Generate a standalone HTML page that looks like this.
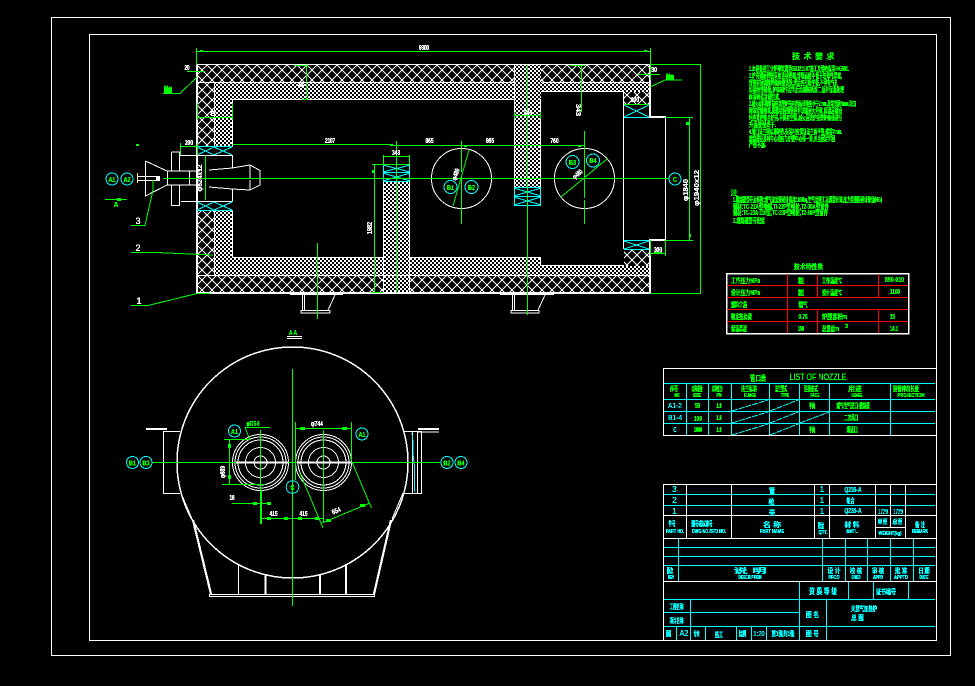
<!DOCTYPE html>
<html lang="zh">
<head>
<meta charset="utf-8">
<title>CAD Drawing</title>
<style>
html,body{margin:0;padding:0;background:#000;width:975px;height:686px;overflow:hidden}
svg{display:block}
text{font-family:"Liberation Sans","Noto Sans CJK SC",sans-serif;font-weight:700;font-size:7px;text-anchor:middle}
.g{fill:#0f0}.w{fill:#fff}.c{fill:#0ff}
.l{text-anchor:start}
.t{font-weight:400}
</style>
</head>
<body>
<svg width="975" height="686" viewBox="0 0 975 686" xmlns="http://www.w3.org/2000/svg" shape-rendering="crispEdges" fill="none">
<defs>
<pattern id="co" width="10" height="10" patternUnits="userSpaceOnUse" x="197" y="65"><path d="M0 0L10 10M10 0L0 10" stroke="#fff" stroke-width="1"/></pattern>
<pattern id="fi" width="4" height="4" patternUnits="userSpaceOnUse"><rect x="0" y="0" width="2" height="2" fill="#fff"/><rect x="2" y="2" width="2" height="2" fill="#fff"/></pattern>
<filter id="th" filterUnits="userSpaceOnUse" x="0" y="0" width="975" height="686" color-interpolation-filters="sRGB"><feComponentTransfer><feFuncA type="discrete" tableValues="0 1 1 1 1 1"/></feComponentTransfer></filter>
</defs>
<rect width="975" height="686" fill="#000"/>

<!-- frames -->
<rect x="51.5" y="17.5" width="899" height="638" stroke="#fff"/>
<rect x="89.5" y="34.5" width="847" height="606" stroke="#fff"/>

<!-- hatches -->
<g fill="url(#co)">
<rect x="197" y="65" width="452" height="17"/>
<rect x="197" y="82" width="17" height="64"/>
<rect x="197" y="210" width="17" height="66"/>
<rect x="197" y="276" width="453" height="17"/>
<rect x="624" y="92" width="25" height="12"/>
<rect x="624" y="249" width="25" height="17"/>
</g>
<g fill="#000"><rect x="514" y="65" width="27" height="122"/><rect x="383" y="276" width="27" height="17"/></g>
<g fill="url(#fi)">
<rect x="214" y="83" width="300" height="16"/>
<rect x="541" y="83" width="108" height="9"/>
<rect x="214" y="99" width="19" height="47"/>
<rect x="214" y="210" width="19" height="47"/>
<rect x="214" y="257" width="327" height="18"/>
<rect x="541" y="266" width="108" height="9"/>
<rect x="514" y="65" width="27" height="122"/>
<rect x="383" y="181" width="27" height="112"/>
</g>

<!-- white body lines -->
<path stroke="#fff" d="M197 64.5H650M197 82.5H514M541 82.5H650M214.5 82V146M214.5 210V275M233 99.5H514M232.5 99V146M232.5 210V257M233 257.5H383M410 257.5H541M540.5 99V187M514.5 65V187M541 91.5H624M623.5 92V249M623.5 117V240M541 265.5H624M540.5 257V266M197 275.5H650M197 292.5H650M383.5 181V292M409.5 181V292M665.5 117V240"/>
<path stroke="#fff" stroke-width="2" d="M197 64V293M650 64V117M650 240V293M649 117H666M649 240H666M197 293H650"/>

<!-- cyan section cells -->
<g stroke="#0ff">
<path d="M197 146.5H233M197 155.5H233M197 147L214 155M214 147L197 155M214 147L232 155M232 147L214 155"/>
<path d="M197 201.5H233M197 210.5H233M197 202L214 210M214 202L197 210M214 202L232 210M232 202L214 210"/>
<path d="M383 164.5H410M383 172.5H410M383 181.5H410M383.5 164V181M409.5 164V181M383 165L410 172M410 165L383 172M383 173L410 181M410 173L383 181"/>
<path d="M514 187.5H541M514 196.5H541M514 205.5H541M514.5 187V206M540.5 187V206M514 188L541 196M541 188L514 196M514 197L541 205M541 197L514 205"/>
<path d="M624 104.5H649M624 117.5H649M624 105L649 117M649 105L624 117"/>
<path d="M624 240.5H649M624 249.5H649M624 241L649 249M649 241L624 249"/>
</g>

<!-- supports -->
<g stroke="#fff">
<path stroke-width="2" d="M290 294H343M500 294H554"/>
<path d="M302.5 295V311M304.5 295V311M301 310.5H330V313H301ZM335 295L328 310"/>
<path d="M512.5 295V311M514.5 295V311M511 310.5H539V313H511ZM545 295L538 310"/>
</g>

<!-- burner -->
<path stroke="#fff" d="M145.5 161L167 171H200M145.5 161V196L167 185H200M167.5 171V185M189.5 171V185M171.5 152V171M179.5 152V171M171.5 152H180M180 155.5H232M232.5 155V168L209 170M232 168L250 165L260 170.5V179M250 165V178M260 179V185L250 190L232 189L209 187M250 180V190M232.5 189V201M181 201.5H232M171.5 185V205.5H180M179.5 185V205"/>
<path stroke="#ff0" d="M137.5 173V183"/>
<path stroke="#fff" d="M137 176.5H160M137 180.5H160"/>
<rect x="156" y="177" width="4" height="3" fill="#fff"/>

<!-- circles on elevation -->
<g stroke="#fff"><circle cx="461.5" cy="178.5" r="30"/><circle cx="584.5" cy="178.5" r="30"/></g>

<!-- green lines elevation -->
<g stroke="#0f0">
<path d="M197 51.5H650M196.5 48V65M650.5 48V80"/>
<path d="M187 71.5H205M163 93.5H180L197 77"/>
<path d="M294 65.5H308M306.5 65V99M302 99.5H308"/>
<path d="M570 65.5H585M581.5 65V112"/>
<path d="M197.5 103V120M232.5 103V120M197 117.5H232"/>
<path d="M180.5 143V155M197.5 143V155M180 146.5H197"/>
<path d="M233 144.5H393M393 145.5H461M461 145.5H584"/>
<path d="M372 164.5H410M374.5 164V292M371 292.5H383M383.5 155V165M409.5 155V165M383 156.5H409"/>
<path d="M396.5 141V293M527.5 65V315M317.5 243V319"/>
<path d="M461.5 141V172M461.5 176V224M584.5 131V198M584.5 200V224"/>
<path d="M163 178.5H427M427 178.5H669"/>
<path d="M453 206L469 150M561 197L607 159"/>
<path d="M205.5 155V200"/>
<path d="M514 115.5H541M514.5 112V119M540.5 112V119"/>
<path d="M105 199.5H127M131 225.5H145L153 190V180M131 252.5H157L179 253.5L213 255M131 305.5H148L197 293.5H210"/>
<path d="M638 74.5H660M650 87L665 80H682M624 104.5H649"/>
<path d="M650.5 240V256M665.5 240V256M650 253.5H665M665 117.5H693M689.5 117V240M665 240.5H693"/>
<path d="M650 64.5H701M700.5 64V293M650 293.5H701"/>
</g>
<g fill="#0f0">
<rect x="200" y="50" width="3" height="2"/><rect x="644" y="50" width="3" height="2"/>
<rect x="164" y="88" width="8" height="5"/><rect x="666" y="75" width="8" height="5"/>
<rect x="117" y="198" width="4" height="3"/>
<rect x="136" y="144" width="3" height="2"/><rect x="390" y="144" width="3" height="2"/>
<rect x="464" y="145" width="3" height="2"/><rect x="578" y="145" width="3" height="2"/>
<rect x="372" y="170" width="3" height="3"/><rect x="686" y="122" width="3" height="3"/><rect x="689" y="234" width="2" height="3"/>
<rect x="654" y="252" width="8" height="2"/>
</g>

<!-- cyan circles elevation -->
<g stroke="#0ff">
<circle cx="112" cy="179" r="6"/><circle cx="127" cy="179" r="6"/>
<circle cx="572.5" cy="162" r="6.5"/><circle cx="593" cy="160.5" r="6.5"/>
<circle cx="450.5" cy="187" r="6.5"/><circle cx="471.5" cy="187" r="6.5"/>
<circle cx="675" cy="179" r="6"/>
</g>

<!-- plan view -->
<g stroke="#fff">
<circle cx="292.5" cy="462.5" r="115.5" stroke-width="1.5"/>
<path stroke-width="2" d="M146 429H167M418 429H439"/>
<path d="M163.5 431V493.5H180M163.5 431.5H180M403 431.5H421.5V493.5H403M412.5 432V493M417.5 432V493M417 432H439"/>
<path d="M181 493L192 519M403 493L392 519M209.5 594.5H375M209.5 596.5H375M209.5 594V597M374.5 594V597"/>
<path stroke-width="2.2" d="M193 520L211 594M391 520L374 594M265.5 575V594M320 575V594M346 564V594"/>
<path d="M238.5 564V594"/>
<path d="M287 336.5H302M287 338.5H302"/>
<g>
<circle cx="260.5" cy="462.5" r="28"/><circle cx="260.5" cy="462.5" r="25.5"/><circle cx="260.5" cy="462.5" r="22.5"/><circle cx="260.5" cy="462.5" r="15"/><circle cx="260.5" cy="462.5" r="6.5"/>
<circle cx="323.5" cy="462.5" r="28"/><circle cx="323.5" cy="462.5" r="25.5"/><circle cx="323.5" cy="462.5" r="22.5"/><circle cx="323.5" cy="462.5" r="15"/><circle cx="323.5" cy="462.5" r="6.5"/>
</g>
</g>
<path stroke="#0ff" d="M412 433C414 445 412 452 414 462C416 475 413 482 415 492"/>
<g stroke="#0f0">
<path d="M152 462.5H440"/>
<path d="M292.5 369V606"/>
<path d="M260.5 430V490M323.5 430V521"/>
<path stroke-width="2" d="M261 490V524"/>
<path d="M296 428.5H351M295.5 422V480M351.5 422V461"/>
<path d="M245 427.5H270M245 427.5L250 440"/>
<path d="M224 439.5H250M229.5 439V484M222 484.5H265"/>
<path d="M232 503.5H270M260 518.5H323M323.5 490V522"/>
<path d="M300 473L323 528M352 462L371.5 508M322 523L370 503"/>
</g>
<path stroke="#fff" stroke-width="2" d="M236 462.5H288M297 462.5H351"/>
<g fill="#0f0">
<rect x="228" y="444" width="3" height="4"/><rect x="228" y="475" width="3" height="4"/>
<rect x="300" y="427" width="5" height="3"/><rect x="342" y="427" width="5" height="3"/>
<rect x="253" y="502" width="4" height="3"/><rect x="267" y="502" width="4" height="3"/>
<rect x="267" y="517" width="4" height="3"/><rect x="284" y="517" width="4" height="3"/><rect x="298" y="517" width="4" height="3"/><rect x="315" y="517" width="4" height="3"/>
<rect x="326" y="519" width="5" height="3"/><rect x="360" y="504" width="5" height="3"/>
</g>
<g stroke="#0ff">
<circle cx="234.5" cy="431" r="6"/><circle cx="362" cy="434" r="6"/><circle cx="292.5" cy="487" r="6.3"/>
<circle cx="132.5" cy="462.5" r="6"/><circle cx="146" cy="462.5" r="6"/>
<circle cx="447" cy="462.5" r="6"/><circle cx="461" cy="462.5" r="6"/>
</g>

<!-- tech table -->
<rect x="726.5" y="273.5" width="182" height="60" stroke="#fff" stroke-width="1.5"/>
<path stroke="#f00" d="M727 285.5H908M727 297.5H908M727 309.5H908M727 321.5H908M787.5 274V333M817.5 274V297M817.5 310V333M878.5 274V297M878.5 310V333"/>

<!-- nozzle table -->
<g stroke="#0ff">
<path d="M664 383.5H935M664 399.5H935M664 411.5H935M664 423.5H935M686.5 383V436M708.5 383V436M731.5 383V436M769.5 383V436M799.5 383V436M829.5 383V436M890.5 383V436"/>
<path stroke-dasharray="6 1" d="M732 411L768 400M770 411L798 400M732 423L768 412M770 423L798 412M800 423L829 412M732 435L768 424M770 435L798 424"/>
</g>
<path stroke="#fff" d="M663.5 368V436M664 368.5H936M664 435.5H936"/>

<!-- parts table -->
<g stroke="#0ff">
<path d="M664 494.5H935M664 505.5H935M664 547.5H935M664 556.5H935M664 565.5H935M678.5 539V581M822.5 539V581M845.5 539V581M867.5 539V581M890.5 539V581M913.5 539V581"/>
<path d="M664 599.5H935M664 612.5H799M664 626.5H935M799.5 582V640M848.5 582V599M873.5 582V599M908.5 582V599M690.5 600V640M826.5 600V640M676.5 627V640M705.5 627V640M736.5 627V640M751.5 627V640M766.5 627V640"/>
</g>
<path stroke="#fff" d="M663.5 484V640M664 484.5H936M664 515.5H936M664 538.5H936M664 581.5H936M686.5 484V538M731.5 484V538M814.5 484V538M829.5 484V538M875.5 484V538M890.5 484V528M905.5 484V538M875 527.5H905"/>

<!-- all text -->
<g filter="url(#th)">
<!-- elevation dims -->
<text class="w" x="424" y="50" textLength="10" lengthAdjust="spacingAndGlyphs">9300</text>
<text class="w" x="187" y="70" textLength="5" lengthAdjust="spacingAndGlyphs">20</text>
<text class="g" x="168" y="91" font-size="6" style="font-size:6px" textLength="8" lengthAdjust="spacingAndGlyphs">耐火</text>
<text class="w" x="301" y="87" textLength="6" lengthAdjust="spacingAndGlyphs">8</text>
<text class="w" x="213" y="116" textLength="6" lengthAdjust="spacingAndGlyphs">8</text>
<text class="w" x="189" y="145" textLength="8" lengthAdjust="spacingAndGlyphs">200</text>
<text class="w" x="330" y="143" textLength="10" lengthAdjust="spacingAndGlyphs">2107</text>
<text class="w" x="396" y="155" textLength="8" lengthAdjust="spacingAndGlyphs">343</text>
<text class="w" x="429.5" y="143" textLength="8" lengthAdjust="spacingAndGlyphs">865</text>
<text class="w" x="490" y="143" textLength="8" lengthAdjust="spacingAndGlyphs">865</text>
<text class="w" x="554.5" y="143" textLength="8" lengthAdjust="spacingAndGlyphs">760</text>
<text class="w" x="528" y="115" textLength="8" lengthAdjust="spacingAndGlyphs">343</text>
<text class="w" x="635" y="102" textLength="8" lengthAdjust="spacingAndGlyphs">100</text>
<text class="w" x="658" y="252" textLength="8" lengthAdjust="spacingAndGlyphs">300</text>
<text class="w" x="654" y="72" textLength="6" lengthAdjust="spacingAndGlyphs">30</text>
<text class="g" x="670" y="79" style="font-size:6px" textLength="8" lengthAdjust="spacingAndGlyphs">耐火</text>
<text class="w" transform="translate(202,178) rotate(-90)" textLength="27" lengthAdjust="spacingAndGlyphs">φ624x12</text>
<text class="w" transform="translate(372,228) rotate(-90)" textLength="12" lengthAdjust="spacingAndGlyphs">1982</text>
<text class="w" transform="translate(576,110) rotate(90)" textLength="12" lengthAdjust="spacingAndGlyphs">343</text>
<text class="w" transform="translate(458,175) rotate(-72)" textLength="12" lengthAdjust="spacingAndGlyphs">φ480</text>
<text class="w" transform="translate(579,176) rotate(-40)" textLength="11" lengthAdjust="spacingAndGlyphs">φ480</text>
<text class="w" transform="translate(688,190) rotate(-90)" textLength="22" lengthAdjust="spacingAndGlyphs">φ1840</text>
<text class="w" transform="translate(699,188) rotate(-90)" textLength="36" lengthAdjust="spacingAndGlyphs">φ1940x12</text>
<text class="g" x="112" y="182" textLength="7" lengthAdjust="spacingAndGlyphs">A1</text>
<text class="g" x="127" y="182" textLength="7" lengthAdjust="spacingAndGlyphs">A2</text>
<text class="g" x="116" y="207" textLength="5" lengthAdjust="spacingAndGlyphs">A</text>
<text class="w t" x="138" y="224" style="font-size:9px">3</text>
<text class="w t" x="138" y="251" style="font-size:9px">2</text>
<text class="w t" x="139" y="304" style="font-size:9px">1</text>
<text class="g" x="572.5" y="165" textLength="7" lengthAdjust="spacingAndGlyphs">B3</text>
<text class="g" x="593" y="163" textLength="7" lengthAdjust="spacingAndGlyphs">B4</text>
<text class="g" x="450.5" y="190" textLength="7" lengthAdjust="spacingAndGlyphs">B1</text>
<text class="g" x="471.5" y="190" textLength="7" lengthAdjust="spacingAndGlyphs">B2</text>
<text class="g" x="675" y="182" textLength="4" lengthAdjust="spacingAndGlyphs">C</text>

<!-- plan dims -->
<text class="g" x="293" y="335" textLength="8" lengthAdjust="spacingAndGlyphs">A-A</text>
<text class="w" x="317" y="426" textLength="12" lengthAdjust="spacingAndGlyphs">φ744</text>
<text class="g" x="253" y="426" textLength="13" lengthAdjust="spacingAndGlyphs">φ575-8</text>
<text class="g" x="234.5" y="434" textLength="7" lengthAdjust="spacingAndGlyphs">A1</text>
<text class="g" x="362" y="437" textLength="7" lengthAdjust="spacingAndGlyphs">A1</text>
<text class="g" x="292.5" y="490" textLength="4" lengthAdjust="spacingAndGlyphs">C</text>
<text class="g" x="132.5" y="465.5" textLength="7" lengthAdjust="spacingAndGlyphs">B1</text>
<text class="g" x="146" y="465.5" textLength="7" lengthAdjust="spacingAndGlyphs">B3</text>
<text class="g" x="447" y="465.5" textLength="7" lengthAdjust="spacingAndGlyphs">B2</text>
<text class="g" x="461" y="465.5" textLength="7" lengthAdjust="spacingAndGlyphs">B4</text>
<text class="w" transform="translate(225,472) rotate(-90)" textLength="12" lengthAdjust="spacingAndGlyphs">φ689</text>
<text class="w" x="232" y="500" textLength="5" lengthAdjust="spacingAndGlyphs">16</text>
<text class="w" x="273.5" y="516" textLength="8" lengthAdjust="spacingAndGlyphs">415</text>
<text class="w" x="303.5" y="516" textLength="8" lengthAdjust="spacingAndGlyphs">415</text>
<text class="w" transform="translate(337,513) rotate(-22)" textLength="9" lengthAdjust="spacingAndGlyphs">654</text>

<!-- requirements -->
<text class="g" x="796" y="59" style="font-size:8px">技</text>
<text class="g" x="807.5" y="59" style="font-size:8px">术</text>
<text class="g" x="819" y="59" style="font-size:8px">要</text>
<text class="g" x="830.5" y="59" style="font-size:8px">求</text>
<g class="g" style="fill:#0f0">
<text class="g l" x="749" y="71" textLength="100" lengthAdjust="spacingAndGlyphs">1.本设备按工业炉砌筑规范GBJ211-87施工及验收标准-HG501.</text>
<text class="g l" x="749" y="78" textLength="93" lengthAdjust="spacingAndGlyphs">2.炉壳钢板焊接采用连续焊缝,焊缝高度不低于较薄件厚度,</text>
<text class="g l" x="749" y="85" textLength="89" lengthAdjust="spacingAndGlyphs">焊接前须清除焊缝两侧铁锈,焊后应打磨平整,不得有气孔</text>
<text class="g l" x="749" y="92" textLength="95" lengthAdjust="spacingAndGlyphs">和裂纹等缺陷,炉体制作完毕后涂刷防锈漆二道并保温处理</text>
<text class="g l" x="749" y="99" textLength="31" lengthAdjust="spacingAndGlyphs">面漆两道涂刷完成.</text>
<text class="g l" x="749" y="106" textLength="107" lengthAdjust="spacingAndGlyphs">3.耐火材料砌筑前应清理炉壳内表面,砖缝应小于2mm,灰浆饱满5mm.均匀</text>
<text class="g l" x="749" y="113" textLength="93" lengthAdjust="spacingAndGlyphs">砌体错缝砌筑,膨胀缝按图留设并填塞耐火纤维,保温层铺设</text>
<text class="g l" x="749" y="120" textLength="93" lengthAdjust="spacingAndGlyphs">时应紧密贴合炉壳,不得有空隙,耐火层烘炉按烘炉曲线进行</text>
<text class="g l" x="749" y="127" textLength="27" lengthAdjust="spacingAndGlyphs">升温缓慢烘干.</text>
<text class="g l" x="749" y="134" textLength="93" lengthAdjust="spacingAndGlyphs">4.管口法兰按标准制作,安装时应保证法兰面平整,螺栓7mm.</text>
<text class="g l" x="749" y="141" textLength="86" lengthAdjust="spacingAndGlyphs">燃烧器安装时中心线应与炉膛中心线一致,并且固定牢固</text>
<text class="g l" x="749" y="147" textLength="17" lengthAdjust="spacingAndGlyphs">严密不漏.</text>
</g>

<!-- notes -->
<text class="g" x="734" y="195">注</text>
<text class="g l" x="733" y="202" textLength="149" lengthAdjust="spacingAndGlyphs">1.燃烧器型号及参数:燃气流量按设计选用1100kg,空气量按工况调整计算,压力范围按设计取值(HG)</text>
<text class="g l" x="733" y="209" textLength="96" lengthAdjust="spacingAndGlyphs">钢材:TC-22A型喷嘴,TI-22P型喷枪,T2-30A型管件</text>
<text class="g l" x="733" y="215" textLength="95" lengthAdjust="spacingAndGlyphs">钢材:TC-23A-110型,TC-23P型喷枪,T2-30P型管件</text>
<text class="g l" x="733" y="223" textLength="32" lengthAdjust="spacingAndGlyphs">2.燃烧器型号配套</text>

<text class="g" x="808.5" y="269" textLength="29" lengthAdjust="spacingAndGlyphs">技术特性表</text>
<text class="g l" x="731" y="283" textLength="29" lengthAdjust="spacingAndGlyphs">工作压力MPa</text>
<text class="g" x="801" y="283" textLength="6" lengthAdjust="spacingAndGlyphs">常压</text>
<text class="g l" x="822" y="283" textLength="20" lengthAdjust="spacingAndGlyphs">工作温度℃</text>
<text class="g" x="894.5" y="282" textLength="19" lengthAdjust="spacingAndGlyphs">850-910</text>
<text class="g l" x="731" y="295" textLength="29" lengthAdjust="spacingAndGlyphs">设计压力MPa</text>
<text class="g" x="801" y="295" textLength="6" lengthAdjust="spacingAndGlyphs">常压</text>
<text class="g l" x="822" y="295" textLength="20" lengthAdjust="spacingAndGlyphs">设计温度℃</text>
<text class="g" x="895" y="294" textLength="10" lengthAdjust="spacingAndGlyphs">1100</text>
<text class="g l" x="731" y="307" textLength="16" lengthAdjust="spacingAndGlyphs">燃料介质</text>
<text class="g" x="803" y="307" textLength="9" lengthAdjust="spacingAndGlyphs">燃气</text>
<text class="g l" x="731" y="319" textLength="21" lengthAdjust="spacingAndGlyphs">额定热负荷</text>
<text class="g" x="803" y="319" textLength="9" lengthAdjust="spacingAndGlyphs">0.75</text>
<text class="g l" x="822" y="319" textLength="25" lengthAdjust="spacingAndGlyphs">炉膛容积m</text>
<text class="g" x="892.5" y="319" textLength="5" lengthAdjust="spacingAndGlyphs">15</text>
<text class="g l" x="731" y="331" textLength="16" lengthAdjust="spacingAndGlyphs">保温厚度</text>
<text class="g" x="801" y="331" textLength="6" lengthAdjust="spacingAndGlyphs">150</text>
<text class="g l" x="822" y="331" textLength="17" lengthAdjust="spacingAndGlyphs">总重量m</text>
<text class="g" x="846.5" y="328" style="font-size:6px">3</text>
<text class="g" x="894" y="331" textLength="8" lengthAdjust="spacingAndGlyphs">14.1</text>

<!-- nozzle table text -->
<text class="g" x="758" y="381" style="font-size:8px" textLength="16" lengthAdjust="spacingAndGlyphs">管口表</text>
<text class="g t" x="818" y="380" style="font-size:9px" textLength="57" lengthAdjust="spacingAndGlyphs">LIST OF NOZZLE</text>
<text class="g" x="674" y="391" textLength="8" lengthAdjust="spacingAndGlyphs">序号</text>
<text class="g" x="697" y="391" textLength="11" lengthAdjust="spacingAndGlyphs">公称通径</text>
<text class="g" x="717" y="391" textLength="11" lengthAdjust="spacingAndGlyphs">公称压力</text>
<text class="g" x="749" y="391" textLength="16" lengthAdjust="spacingAndGlyphs">法兰标准</text>
<text class="g" x="781" y="391" textLength="12" lengthAdjust="spacingAndGlyphs">法兰型式</text>
<text class="g" x="811" y="391" textLength="14" lengthAdjust="spacingAndGlyphs">连接形式</text>
<text class="g" x="855" y="391" textLength="14" lengthAdjust="spacingAndGlyphs">用途</text>
<text class="g" x="906" y="391" textLength="26" lengthAdjust="spacingAndGlyphs">接管伸出长度</text>
<text class="g" x="677" y="397" style="font-size:5px" textLength="5" lengthAdjust="spacingAndGlyphs">NO</text>
<text class="g" x="697" y="397" style="font-size:5px" textLength="8" lengthAdjust="spacingAndGlyphs">SIZE</text>
<text class="g" x="719" y="397" style="font-size:5px" textLength="5" lengthAdjust="spacingAndGlyphs">PN</text>
<text class="g" x="750" y="397" style="font-size:5px" textLength="12" lengthAdjust="spacingAndGlyphs">FLANGE</text>
<text class="g" x="785" y="397" style="font-size:5px" textLength="8" lengthAdjust="spacingAndGlyphs">TYPE</text>
<text class="g" x="815" y="397" style="font-size:5px" textLength="9" lengthAdjust="spacingAndGlyphs">FACE</text>
<text class="g" x="857" y="397" style="font-size:5px" textLength="11" lengthAdjust="spacingAndGlyphs">USAGE</text>
<text class="g" x="911" y="397" style="font-size:5px" textLength="27" lengthAdjust="spacingAndGlyphs">PROJECTION</text>
<text class="c t" x="675" y="408" textLength="14" lengthAdjust="spacingAndGlyphs">A1-2</text>
<text class="c t" x="675" y="420" textLength="14" lengthAdjust="spacingAndGlyphs">B1-4</text>
<text class="c t" x="675" y="432" textLength="3" lengthAdjust="spacingAndGlyphs">C</text>
<text class="g" x="697.5" y="408" textLength="5" lengthAdjust="spacingAndGlyphs">50</text>
<text class="g" x="698" y="421" textLength="8" lengthAdjust="spacingAndGlyphs">100</text>
<text class="g" x="698" y="432" textLength="8" lengthAdjust="spacingAndGlyphs">1000</text>
<text class="g" x="719" y="408" textLength="5" lengthAdjust="spacingAndGlyphs">1.6</text>
<text class="g" x="719" y="420" textLength="5" lengthAdjust="spacingAndGlyphs">1.6</text>
<text class="g" x="719" y="432" textLength="5" lengthAdjust="spacingAndGlyphs">1.6</text>
<text class="g" x="812" y="408" textLength="6" lengthAdjust="spacingAndGlyphs">平面</text>
<text class="g" x="812" y="432" textLength="6" lengthAdjust="spacingAndGlyphs">平面</text>
<text class="g" x="853" y="408" textLength="33" lengthAdjust="spacingAndGlyphs">燃气/空气进口-燃烧器</text>
<text class="g" x="851" y="420" textLength="14" lengthAdjust="spacingAndGlyphs">二次风口</text>
<text class="g" x="852" y="432" textLength="11" lengthAdjust="spacingAndGlyphs">烟道口</text>

<!-- parts table text -->
<text class="c t" x="674.5" y="492" style="font-size:8px">3</text>
<text class="c t" x="674.5" y="503" style="font-size:8px">2</text>
<text class="c t" x="674.5" y="514" style="font-size:8px">1</text>
<text class="c" x="772" y="493" textLength="6" lengthAdjust="spacingAndGlyphs">管</text>
<text class="c" x="771.5" y="504" textLength="6" lengthAdjust="spacingAndGlyphs">枪</text>
<text class="c" x="772" y="515" textLength="6" lengthAdjust="spacingAndGlyphs">壳</text>
<text class="c t" x="822" y="492" style="font-size:8px">1</text>
<text class="c t" x="822" y="503" style="font-size:8px">1</text>
<text class="c t" x="822" y="514" style="font-size:8px">1</text>
<text class="c" x="853" y="492" textLength="17" lengthAdjust="spacingAndGlyphs">Q235-A</text>
<text class="c" x="850.5" y="503" textLength="8" lengthAdjust="spacingAndGlyphs">组合</text>
<text class="c" x="853" y="513" textLength="17" lengthAdjust="spacingAndGlyphs">Q235-A</text>
<text class="c t" x="883" y="514" textLength="10" lengthAdjust="spacingAndGlyphs">1729</text>
<text class="c t" x="898" y="514" textLength="10" lengthAdjust="spacingAndGlyphs">1729</text>
<text class="c" x="672" y="526" textLength="7" lengthAdjust="spacingAndGlyphs">件号</text>
<text class="c" x="675" y="533" style="font-size:5px" textLength="18" lengthAdjust="spacingAndGlyphs">PART NO.</text>
<text class="c" x="702" y="526" textLength="21" lengthAdjust="spacingAndGlyphs">图号或标准号</text>
<text class="c" x="709" y="533" style="font-size:5px" textLength="34" lengthAdjust="spacingAndGlyphs">DWG NO./STD NO.</text>
<text class="c" x="772" y="527" textLength="18" lengthAdjust="spacingAndGlyphs">名 称</text>
<text class="c" x="772" y="533" style="font-size:5px" textLength="24" lengthAdjust="spacingAndGlyphs">PART NAME</text>
<text class="c" x="821" y="528" textLength="6" lengthAdjust="spacingAndGlyphs">数量</text>
<text class="c" x="823" y="534" style="font-size:5px" textLength="9" lengthAdjust="spacingAndGlyphs">QTY.</text>
<text class="c" x="852" y="527" textLength="15" lengthAdjust="spacingAndGlyphs">材 料</text>
<text class="c" x="852" y="533" style="font-size:5px" textLength="11" lengthAdjust="spacingAndGlyphs">MAT'L</text>
<text class="c" x="882.5" y="524" style="font-size:6px" textLength="10" lengthAdjust="spacingAndGlyphs">单重</text>
<text class="c" x="897.5" y="524" style="font-size:6px" textLength="10" lengthAdjust="spacingAndGlyphs">总重</text>
<text class="c" x="890" y="535" style="font-size:5px" textLength="23" lengthAdjust="spacingAndGlyphs">WEIGHT(kg)</text>
<text class="c" x="920" y="527" textLength="10" lengthAdjust="spacingAndGlyphs">备 注</text>
<text class="c" x="920" y="533" style="font-size:5px" textLength="16" lengthAdjust="spacingAndGlyphs">REMARK</text>

<!-- revision row -->
<text class="c" x="670" y="573" textLength="6" lengthAdjust="spacingAndGlyphs">版次</text>
<text class="c" x="671" y="579" style="font-size:5px" textLength="6" lengthAdjust="spacingAndGlyphs">REV</text>
<text class="c" x="750" y="573" textLength="33" lengthAdjust="spacingAndGlyphs">说 明</text>
<text class="c" x="750" y="579" style="font-size:5px" textLength="23" lengthAdjust="spacingAndGlyphs">DESCRIPTION</text>
<text class="c" x="834" y="573" textLength="13" lengthAdjust="spacingAndGlyphs">设 计</text>
<text class="c" x="834" y="579" style="font-size:5px" textLength="11" lengthAdjust="spacingAndGlyphs">PROD</text>
<text class="c" x="856" y="573" textLength="12" lengthAdjust="spacingAndGlyphs">校 核</text>
<text class="c" x="856" y="579" style="font-size:5px" textLength="9" lengthAdjust="spacingAndGlyphs">CHKD</text>
<text class="c" x="878" y="573" textLength="12" lengthAdjust="spacingAndGlyphs">审 核</text>
<text class="c" x="878" y="579" style="font-size:5px" textLength="10" lengthAdjust="spacingAndGlyphs">APPD</text>
<text class="c" x="901" y="573" textLength="12" lengthAdjust="spacingAndGlyphs">批 准</text>
<text class="c" x="901" y="579" style="font-size:5px" textLength="14" lengthAdjust="spacingAndGlyphs">APPTD</text>
<text class="c" x="924" y="573" textLength="11" lengthAdjust="spacingAndGlyphs">日 期</text>
<text class="c" x="924" y="579" style="font-size:5px" textLength="9" lengthAdjust="spacingAndGlyphs">DATE</text>

<!-- title block -->
<text class="c" x="823" y="594" style="font-size:8px" textLength="28" lengthAdjust="spacingAndGlyphs">资 质 等 级</text>
<text class="c" x="886" y="594" textLength="20" lengthAdjust="spacingAndGlyphs">证书编号</text>
<text class="c" x="676.5" y="609" textLength="14" lengthAdjust="spacingAndGlyphs">工程名称</text>
<text class="c" x="676.5" y="623" textLength="14" lengthAdjust="spacingAndGlyphs">项目名称</text>
<text class="c" x="812.5" y="617" textLength="13" lengthAdjust="spacingAndGlyphs">图 名</text>
<text class="c l" x="851" y="611" textLength="26" lengthAdjust="spacingAndGlyphs">天然气加热炉</text>
<text class="c l" x="851" y="620" textLength="13" lengthAdjust="spacingAndGlyphs">总 图</text>
<text class="c" x="668.5" y="636" textLength="5" lengthAdjust="spacingAndGlyphs">图幅</text>
<text class="c t" x="684" y="636" style="font-size:8px" textLength="9" lengthAdjust="spacingAndGlyphs">A2</text>
<text class="c" x="696.5" y="636" textLength="6" lengthAdjust="spacingAndGlyphs">专业</text>
<text class="c" x="719" y="637" textLength="8" lengthAdjust="spacingAndGlyphs">热工</text>
<text class="c" x="742.5" y="636" textLength="7" lengthAdjust="spacingAndGlyphs">比例</text>
<text class="c t" x="759" y="636" textLength="11" lengthAdjust="spacingAndGlyphs">1:20</text>
<text class="c" x="783" y="636" textLength="23" lengthAdjust="spacingAndGlyphs">第1张共1张</text>
<text class="c" x="812.5" y="636" textLength="13" lengthAdjust="spacingAndGlyphs">图 号</text>
</g>
</svg>
</body>
</html>
